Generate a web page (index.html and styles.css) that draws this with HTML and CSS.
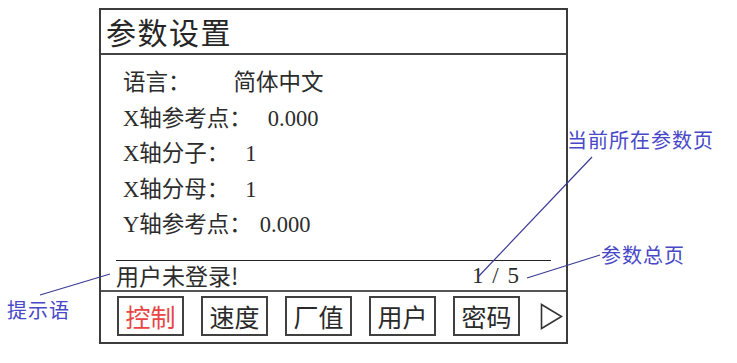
FILE: index.html
```html
<!DOCTYPE html>
<html lang="zh">
<head>
<meta charset="utf-8">
<title>参数设置</title>
<link rel="stylesheet" href="styles.css">
</head>
<body>
<div class="stage">
  <div class="panel">
    <div class="title">参数设置</div>
    <div class="content">
      <div class="row"><span class="label">语言：</span><span class="value v-wide">简体中文</span></div>
      <div class="row"><span class="label">X轴参考点：</span><span class="value">0.000</span></div>
      <div class="row"><span class="label">X轴分子：</span><span class="value">1</span></div>
      <div class="row"><span class="label">X轴分母：</span><span class="value">1</span></div>
      <div class="row"><span class="label">Y轴参考点：</span><span class="value v-tight">0.000</span></div>
    </div>
    <div class="sep"></div>
    <div class="status">
      <span class="hint">用户未登录!</span>
      <span class="page">1 / 5</span>
    </div>
    <div class="footer">
      <span class="btn btn-active">控制</span>
      <span class="btn">速度</span>
      <span class="btn">厂值</span>
      <span class="btn">用户</span>
      <span class="btn">密码</span>
      <svg class="next" width="23" height="27" viewBox="0 0 23 27"><path d="M1.5 1.5 L21.5 13.5 L1.5 25.5 Z" fill="none" stroke="#333" stroke-width="1.6"/></svg>
    </div>
  </div>

  <svg class="leaders" width="737" height="363" viewBox="0 0 737 363">
    <line x1="592" y1="157" x2="478" y2="277" stroke="#3b3b95" stroke-width="1.2"/>
    <line x1="600" y1="255" x2="527" y2="278" stroke="#3b3b95" stroke-width="1.2"/>
    <line x1="40" y1="295" x2="110" y2="274" stroke="#3b3b95" stroke-width="1.2"/>
  </svg>
  <span class="note note-page">当前所在参数页</span>
  <span class="note note-total">参数总页</span>
  <span class="note note-hint">提示语</span>
</div>
</body>
</html>
```

FILE: styles.css
```css
html, body {
  margin: 0;
  padding: 0;
  background: #fff;
}

.stage {
  position: relative;
  width: 737px;
  height: 363px;
  overflow: hidden;
  padding-top: 8px;
  box-sizing: border-box;
}

.panel {
  margin-left: 99px;
  width: 469px;
  height: 336px;
  box-sizing: border-box;
  border: 2px solid #3c3c3c;
  display: flex;
  flex-direction: column;
  color: #2a2a2a;
}

.title {
  flex: none;
  height: 43px;
  line-height: 43px;
  padding-left: 5px;
  font-family: "Noto Sans CJK SC", sans-serif;
  font-size: 30px;
  letter-spacing: 1.5px;
  border-bottom: 2px solid #444;
  color: #262626;
}

.content {
  flex: 1;
  padding: 10px 0 0 22px;
  font-family: "Liberation Serif", "Noto Sans CJK SC", serif;
  font-size: 22.5px;
  color: #2c2c2c;
}

.row {
  height: 35.5px;
  line-height: 35.5px;
  white-space: nowrap;
}

.value {
  margin-left: 16px;
}

.value.v-wide {
  margin-left: 43px;
}

.value.v-tight {
  margin-left: 8px;
}

.sep {
  flex: none;
  height: 1px;
  margin: 0 15px;
  background: #222;
}

.status {
  flex: none;
  height: 29px;
  line-height: 29px;
  display: flex;
  justify-content: space-between;
  padding: 0 47px 0 15px;
  font-family: "Liberation Serif", "Noto Sans CJK SC", serif;
  font-size: 22px;
  color: #2c2c2c;
}

.hint {
  font-family: "Noto Sans CJK SC", sans-serif;
  font-size: 23px;
}

.page {
  font-size: 23px;
  white-space: pre;
  word-spacing: 3px;
}

.footer {
  flex: none;
  height: 52px;
  box-sizing: border-box;
  border-top: 2px solid #555;
  display: flex;
  align-items: flex-start;
  gap: 17px;
  padding: 4px 0 0 16px;
}

.btn {
  width: 67px;
  height: 40px;
  box-sizing: border-box;
  border: 2px solid #404040;
  text-align: center;
  line-height: 36px;
  font-family: "Noto Sans CJK SC", sans-serif;
  font-size: 25px;
  color: #2a2a2a;
}

.btn-active {
  color: #e84545;
}

.next {
  margin-top: 7px;
  margin-left: 3px;
}

.leaders {
  position: absolute;
  left: 0;
  top: 0;
}

.note {
  position: absolute;
  font-family: "Noto Sans CJK SC", sans-serif;
  font-size: 20px;
  line-height: 22px;
  color: #4848c8;
  white-space: nowrap;
  letter-spacing: 1px;
}

.note-page {
  left: 567px;
  top: 129px;
}

.note-total {
  left: 601px;
  top: 244px;
}

.note-hint {
  left: 7px;
  top: 299px;
}
```
